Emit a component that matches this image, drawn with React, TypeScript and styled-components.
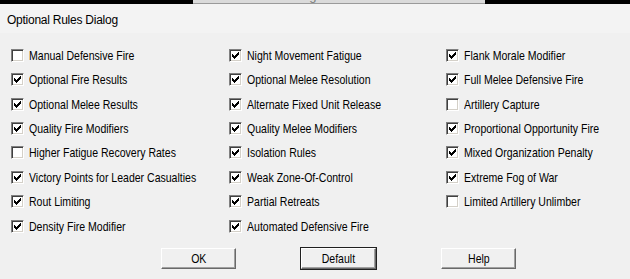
import styled, { createGlobalStyle } from "styled-components";

const GlobalStyle = createGlobalStyle`
  html, body {
    margin: 0;
    padding: 0;
    background: #f0f0f0;
  }
`;

const Screen = styled.div`
  width: 630px;
  height: 279px;
  overflow: hidden;
  display: flex;
  flex-direction: column;
  background: #f0f0f0;
  font-family: "Liberation Sans", Arial, sans-serif;
  color: #000;
`;

const BackStrip = styled.div`
  height: 4px;
  flex-shrink: 0;
  background: #000;
  display: flex;
`;

const BackWindow = styled.div`
  margin-left: 193px;
  width: 268px;
  height: 3px;
  background: #dadada;
  border-bottom: 1px solid #9a9a9a;
  overflow: hidden;
  display: flex;
  justify-content: space-between;
  padding: 0 14px 0 10px;
`;

const BackTitle = styled.span`
  margin-top: -11px;
  font-size: 13px;
  line-height: 14px;
  color: #7a7a7a;
`;

const TitleBar = styled.div`
  height: 29px;
  flex-shrink: 0;
  background: #f3f3f3;
  display: flex;
  align-items: center;
  padding: 2px 0 0 7px;
  box-sizing: border-box;
  font-size: 12px;
  letter-spacing: -0.25px;
`;

const Body = styled.div`
  flex: 1;
  display: flex;
  flex-direction: column;
  padding: 10px 0 0 11px;
`;

const RuleGrid = styled.div`
  display: grid;
  grid-template-columns: 218px 217px 1fr;
  grid-template-rows: repeat(8, 24.43px);
  grid-auto-flow: column;
`;

const Rule = styled.label`
  display: flex;
  align-items: center;
  gap: 5px;
  white-space: nowrap;
`;

const Narrow = styled.span`
  display: inline-block;
  font-size: 13.5px;
  transform: scaleX(0.78);
  transform-origin: left center;
`;

const Box = styled.span`
  width: 13px;
  height: 13px;
  box-sizing: border-box;
  flex-shrink: 0;
  background: #fff;
  border-top: 1px solid #808080;
  border-left: 1px solid #808080;
  border-right: 1px solid #ffffff;
  border-bottom: 1px solid #ffffff;
  box-shadow: inset 1px 1px 0 #404040, inset -1px -1px 0 #d4d0c8;
  display: flex;
  align-items: center;
  justify-content: center;
`;

const ButtonRow = styled.div`
  display: flex;
  gap: 65px;
  padding-left: 150px;
  margin-top: 10px;
`;

const Button = styled.button<{ $default?: boolean }>`
  width: 75px;
  height: 21px;
  box-sizing: border-box;
  background: #f0f0f0;
  font-family: "Liberation Sans", Arial, sans-serif;
  color: #000;
  padding: 0;
  border: none;
  border-top: 1px solid #ffffff;
  border-left: 1px solid #ffffff;
  border-right: 1px solid #696969;
  border-bottom: 1px solid #696969;
  box-shadow: inset -1px -1px 0 #a0a0a0;
  outline: ${(p) => (p.$default ? "1px solid #202020" : "none")};
  outline-offset: 0;

  ${Narrow} {
    transform-origin: center center;
  }
`;

const Check = () => (
  <svg width="7" height="7" viewBox="0 0 7 7" shapeRendering="crispEdges">
    <path
      fill="#000"
      d="M6 0h1v3h-1zM5 1h1v3h-1zM4 2h1v3h-1zM0 2h1v3h-1zM1 3h1v3h-1zM2 4h1v3h-1zM3 3h1v3h-1z"
    />
  </svg>
);

const rules: [string, boolean][] = [
  ["Manual Defensive Fire", false],
  ["Optional Fire Results", true],
  ["Optional Melee Results", true],
  ["Quality Fire Modifiers", true],
  ["Higher Fatigue Recovery Rates", false],
  ["Victory Points for Leader Casualties", true],
  ["Rout Limiting", true],
  ["Density Fire Modifier", true],
  ["Night Movement Fatigue", true],
  ["Optional Melee Resolution", true],
  ["Alternate Fixed Unit Release", true],
  ["Quality Melee Modifiers", true],
  ["Isolation Rules", true],
  ["Weak Zone-Of-Control", true],
  ["Partial Retreats", true],
  ["Automated Defensive Fire", true],
  ["Flank Morale Modifier", true],
  ["Full Melee Defensive Fire", true],
  ["Artillery Capture", false],
  ["Proportional Opportunity Fire", true],
  ["Mixed Organization Penalty", true],
  ["Extreme Fog of War", true],
  ["Limited Artillery Unlimber", false],
];

export default function App() {
  return (
    <>
      <GlobalStyle />
      <Screen>
        <BackStrip>
          <BackWindow>
            <BackTitle>A/I Selection Dialog</BackTitle>
            <BackTitle>^</BackTitle>
          </BackWindow>
        </BackStrip>
        <TitleBar>Optional Rules Dialog</TitleBar>
        <Body>
          <RuleGrid>
            {rules.map(([label, on]) => (
              <Rule key={label}>
                <Box>{on && <Check />}</Box>
                <Narrow>{label}</Narrow>
              </Rule>
            ))}
          </RuleGrid>
          <ButtonRow>
            <Button>
              <Narrow>OK</Narrow>
            </Button>
            <Button $default>
              <Narrow>Default</Narrow>
            </Button>
            <Button>
              <Narrow>Help</Narrow>
            </Button>
          </ButtonRow>
        </Body>
      </Screen>
    </>
  );
}
